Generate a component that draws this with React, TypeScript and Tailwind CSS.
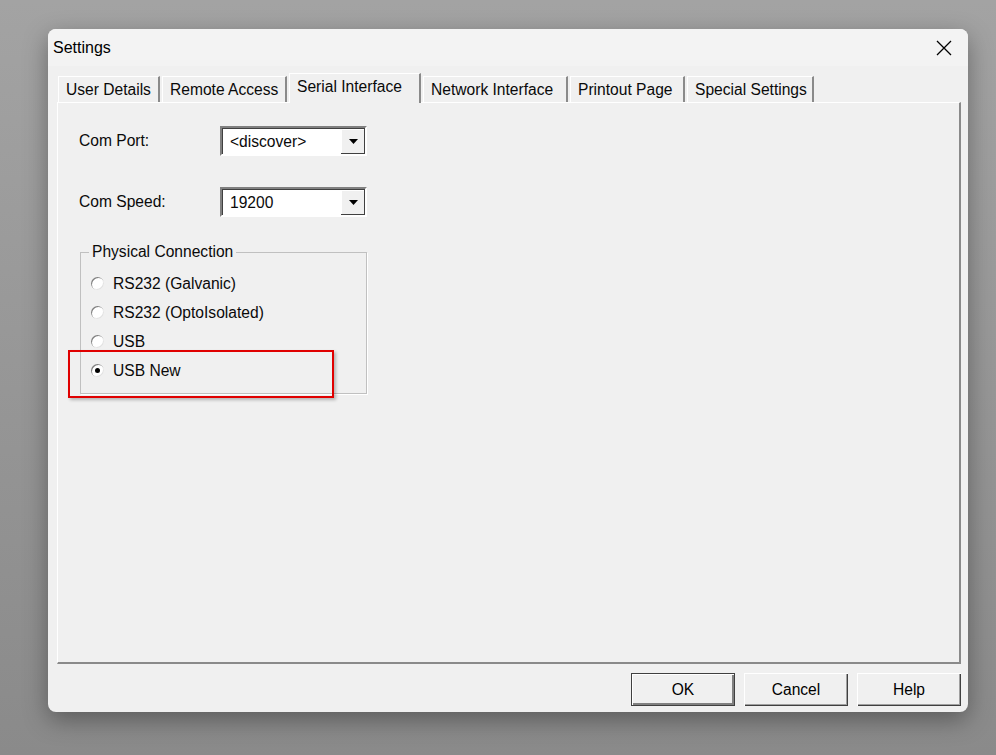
import React from 'react';

const font = { fontFamily: '"Liberation Sans", Arial, sans-serif' };

const tabs = [
  { t: 'User Details', w: 'w-[102px]' },
  { t: 'Remote Access', w: 'w-[125px]' },
  { t: 'Serial Interface', w: 'w-[132px]' },
  { t: 'Network Interface', w: 'w-[145px]' },
  { t: 'Printout Page', w: 'w-[115px]' },
  { t: 'Special Settings', w: 'w-[127px]' },
];

function Combo({ value }: { value: string }) {
  return (
    <div className="flex h-[30px] w-[147px] border-2 border-t-[#808080] border-l-[#808080] border-b-white border-r-white bg-white">
      <div className="flex flex-1 items-center border-t border-l border-[#404040] border-r-0 border-b-0 pl-[7px] text-[15.6px] text-[#0a0a0a]">
        {value}
      </div>
      <div className="flex w-[24px] items-center justify-center border-t border-[#404040] bg-[#f0f0f0] shadow-[inset_-1px_-1px_0_#404040,inset_1px_1px_0_#fff]">
        <svg width="9" height="5" viewBox="0 0 9 5">
          <path d="M0 0h9L4.5 5z" fill="#000" />
        </svg>
      </div>
    </div>
  );
}

function Radio({ label, checked }: { label: string; checked?: boolean }) {
  return (
    <div className="flex h-[29px] items-center gap-[9px]">
      <div className="flex h-[13px] w-[13px] items-center justify-center rounded-full bg-white shadow-[inset_1px_1px_0_#808080,inset_-1px_-1px_0_#e3e3e3]">
        {checked && <div className="h-[5px] w-[5px] rounded-full bg-black" />}
      </div>
      <span className="text-[15.6px] text-[#0a0a0a]">{label}</span>
    </div>
  );
}

function Btn({ label, def }: { label: string; def?: boolean }) {
  return (
    <div
      className={`flex h-[33px] w-[104px] items-center justify-center bg-[#f0f0f0] text-[15.6px] text-black ${
        def
          ? 'border border-[#404040] shadow-[inset_1px_1px_0_#fff,inset_-2px_-2px_0_#808080]'
          : 'shadow-[inset_1px_1px_0_#fff,inset_-1px_-1px_0_#404040,inset_-2px_-2px_0_#a0a0a0]'
      }`}
    >
      {label}
    </div>
  );
}

export default function App() {
  return (
    <div className="h-[755px] w-[996px] overflow-hidden bg-gradient-to-b from-[#a3a3a3] to-[#8a8a8a] pl-[48px] pt-[29px]" style={font}>
      <div className="flex h-[683px] w-[920px] flex-col rounded-[8px] bg-[#f0f0f0] shadow-[0_8px_24px_rgba(0,0,0,0.35)]">
        {/* Title bar */}
        <div className="flex h-[37px] items-center justify-between rounded-t-[8px] bg-[#f3f3f3] pl-[5px] pr-[16px]">
          <span className="text-[16px] text-black">Settings</span>
          <svg width="16" height="16" viewBox="0 0 16 16">
            <path d="M1 1L15 15M15 1L1 15" stroke="#000" strokeWidth="1.3" />
          </svg>
        </div>

        {/* Tabs */}
        <div className="flex h-[36px] items-end gap-[2px] pl-[10px]">
          {tabs.map(({ t, w }) => {
            const sel = t === 'Serial Interface';
            return (
              <div
                key={t}
                className={`flex items-center pl-[7px] text-[15.6px] text-[#0a0a0a] ${w} ${
                  sel
                    ? 'relative z-10 -mb-px h-[30px] border-t border-l border-white border-r-2 border-r-[#8a8a8a] bg-[#f0f0f0] pb-[3px]'
                    : 'h-[26px] border-t border-l border-white border-r-2 border-r-[#8a8a8a] pt-[1px]'
                }`}
              >
                {t}
              </div>
            );
          })}
        </div>

        {/* Panel */}
        <div className="ml-[9px] mr-[7px] h-[562px] border-t border-l border-white border-r-2 border-b-2 border-r-[#8a8a8a] border-b-[#8a8a8a]">
          <div className="pl-[21px] pt-[23px]">
            <div className="flex items-center">
              <span className="w-[141px] text-[15.6px] text-[#0a0a0a]">Com Port:</span>
              <Combo value="<discover>" />
            </div>
            <div className="mt-[31px] flex items-center">
              <span className="w-[141px] text-[15.6px] text-[#0a0a0a]">Com Speed:</span>
              <Combo value="19200" />
            </div>

            <div className="relative ml-[1px] mt-[35px] h-[142px] w-[287px] border border-[#c0c0c0] shadow-[1px_1px_0_#fff]">
              <span className="absolute -top-[10px] left-[8px] bg-[#f0f0f0] px-[3px] text-[15.6px] leading-[18px] text-[#0a0a0a]">
                Physical Connection
              </span>
              <div className="pl-[10px] pt-[16px]">
                <Radio label="RS232 (Galvanic)" />
                <Radio label="RS232 (OptoIsolated)" />
                <Radio label="USB" />
                <Radio label="USB New" checked />
              </div>
              {/* highlight */}
              <div className="absolute left-[-13px] top-[97px] h-[48px] w-[266px] border-2 border-[#e00000] shadow-[2px_2px_3px_rgba(0,0,0,0.25)]" />
            </div>
          </div>
        </div>

        {/* Buttons */}
        <div className="mt-[9px] flex justify-end gap-[9px] pr-[7px]">
          <Btn label="OK" def />
          <Btn label="Cancel" />
          <Btn label="Help" />
        </div>
      </div>
    </div>
  );
}
